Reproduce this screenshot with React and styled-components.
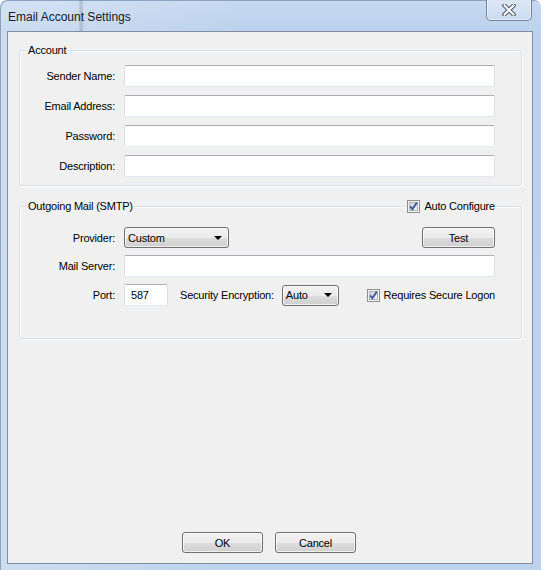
import React from 'react';
import styled, { createGlobalStyle } from 'styled-components';

const GlobalStyle = createGlobalStyle`
  html, body {
    margin: 0;
    padding: 0;
  }
  body {
    width: 541px;
    height: 570px;
    overflow: hidden;
    font-family: "Liberation Sans", Arial, sans-serif;
    font-size: 11px;
    letter-spacing: -0.2px;
    color: #000;
  }
`;

const Frame = styled.div`
  width: 541px;
  height: 570px;
  box-sizing: border-box;
  display: flex;
  flex-direction: column;
  padding: 0 8px 6px 7px;
  border-radius: 7px 7px 0 0;
  background:
    linear-gradient(to right, rgba(255, 255, 255, 0.25), rgba(255, 255, 255, 0) 45%),
    linear-gradient(to bottom, #c6d9f1 0, #bcd1ec 32px, #bdd2ed 100%);
  box-shadow: inset 1px 1px 0 #8ea3bf;
`;

const TitleBar = styled.div`
  height: 31px;
  flex: none;
  display: flex;
  justify-content: space-between;
  align-items: flex-start;
  background: linear-gradient(
    to right,
    transparent 71px,
    rgba(90, 100, 115, 0.18) 73px,
    rgba(90, 100, 115, 0.28) 74px,
    rgba(90, 100, 115, 0.18) 75px,
    transparent 77px
  );
`;

const Title = styled.span`
  font-size: 12px;
  line-height: 14px;
  letter-spacing: 0;
  margin: 10px 0 0 1px;
  color: #111a26;
`;

const CloseButton = styled.div`
  width: 46px;
  height: 21px;
  margin-right: 1px;
  box-sizing: border-box;
  border: 1px solid #72839b;
  border-top: none;
  border-radius: 0 0 5px 5px;
  background: linear-gradient(to bottom, rgba(255, 255, 255, 0.4), rgba(255, 255, 255, 0.15));
  box-shadow: inset 0 0 0 1px rgba(255, 255, 255, 0.5);
  display: flex;
  align-items: center;
  justify-content: center;
`;

const Client = styled.div`
  flex: 1;
  display: flex;
  flex-direction: column;
  background: #f0f0f0;
  border: 1px solid #7f8ea3;
  padding: 0 10px 10px 11px;
`;

const GroupBox = styled.div`
  position: relative;
  margin-top: ${({ $top }) => $top}px;
  padding: ${({ $padTop }) => $padTop}px 26px ${({ $padBottom }) => $padBottom}px 0;
  border: 1px solid #d5dfe5;
  border-radius: 3px;
  box-shadow: inset 1px 1px 0 #fff, 1px 1px 0 #fff;
`;

const Legend = styled.span`
  position: absolute;
  top: -7px;
  left: 6px;
  padding: 0 2px;
  line-height: 13px;
  background: #f0f0f0;
`;

const FormGrid = styled.div`
  display: grid;
  grid-template-columns: 95px 1fr;
  column-gap: 9px;
  row-gap: ${({ $gap }) => $gap}px;
  align-items: center;
`;

const Label = styled.label`
  text-align: right;
`;

const TextBox = styled.div`
  height: 22px;
  width: ${({ $width }) => ($width ? `${$width}px` : 'auto')};
  box-sizing: border-box;
  background: #fff;
  border: 1px solid #dbdfe6;
  border-top-color: #abadb3;
  border-bottom-color: #e3e9ef;
  border-radius: 2px;
  padding: 0 6px;
  display: flex;
  align-items: center;
`;

const Row = styled.div`
  display: flex;
  align-items: center;
`;

const Button = styled.button`
  width: ${({ $width }) => $width}px;
  height: 21px;
  margin-left: ${({ $left }) => ($left === 'auto' ? 'auto' : `${$left || 0}px`)};
  box-sizing: border-box;
  border: 1px solid #707070;
  border-radius: 3px;
  padding: 0;
  font-family: inherit;
  font-size: 11px;
  letter-spacing: -0.2px;
  color: #000;
  background: linear-gradient(to bottom, #f2f2f2 0%, #ebebeb 50%, #dddddd 51%, #cfcfcf 100%);
  box-shadow: inset 0 0 0 1px rgba(255, 255, 255, 0.7);
`;

const Select = styled.div`
  width: ${({ $width }) => $width}px;
  height: 21px;
  margin-left: ${({ $left }) => $left || 0}px;
  box-sizing: border-box;
  border: 1px solid #707070;
  border-radius: 3px;
  padding: 0 6px 0 3px;
  display: flex;
  align-items: center;
  justify-content: space-between;
  background: linear-gradient(to bottom, #f2f2f2 0%, #ebebeb 50%, #dddddd 51%, #cfcfcf 100%);
  box-shadow: inset 0 0 0 1px rgba(255, 255, 255, 0.7);
`;

const Arrow = styled.span`
  width: 0;
  height: 0;
  border-left: 4px solid transparent;
  border-right: 4px solid transparent;
  border-top: 4px solid #000;
`;

const Text = styled.span`
  margin-left: ${({ $left }) => $left || 0}px;
`;

const Check = styled.label`
  display: flex;
  align-items: center;
  gap: 4px;
  margin-left: ${({ $left }) => ($left === 'auto' ? 'auto' : `${$left || 0}px`)};
`;

const FloatingCheck = styled(Check)`
  position: absolute;
  top: -7px;
  right: 26px;
  line-height: 13px;
  padding-left: 1px;
  background: #f0f0f0;
`;

const Spacer = styled.div`
  flex: 1;
`;

const ButtonRow = styled.div`
  display: flex;
  justify-content: center;
  gap: 12px;
  padding-right: 3px;
`;

const CheckIcon = () => (
  <svg width="13" height="13" viewBox="0 0 13 13">
    <defs>
      <linearGradient id="cbg" x1="0" y1="0" x2="1" y2="1">
        <stop offset="0" stopColor="#cbcfd5" />
        <stop offset="1" stopColor="#f7f7f7" />
      </linearGradient>
    </defs>
    <rect x="0.5" y="0.5" width="12" height="12" fill="#f4f4f4" stroke="#8e8f8f" />
    <rect x="2.5" y="2.5" width="8" height="8" fill="url(#cbg)" stroke="#aeb3b9" />
    <path d="M3.2 6.4 L5.4 9.2 L9.8 2.6" fill="none" stroke="#3c5a9a" strokeWidth="1.9" />
  </svg>
);

const CloseGlyph = () => (
  <svg width="14" height="12" viewBox="0 0 14 12">
    <path
      d="M2.5 1.5 L11.5 10.5 M11.5 1.5 L2.5 10.5"
      stroke="#4b5363"
      strokeWidth="4.2"
      strokeLinecap="square"
    />
    <path
      d="M2.5 1.5 L11.5 10.5 M11.5 1.5 L2.5 10.5"
      stroke="#ffffff"
      strokeWidth="2.2"
      strokeLinecap="square"
    />
  </svg>
);

const accountFields = ['Sender Name:', 'Email Address:', 'Password:', 'Description:'];

export default function App() {
  return (
    <>
      <GlobalStyle />
      <Frame>
        <TitleBar>
          <Title>Email Account Settings</Title>
          <CloseButton>
            <CloseGlyph />
          </CloseButton>
        </TitleBar>
        <Client>
          <GroupBox $top={18} $padTop={14} $padBottom={8}>
            <Legend>Account</Legend>
            <FormGrid $gap={8}>
              {accountFields.map((label) => (
                <React.Fragment key={label}>
                  <Label>{label}</Label>
                  <TextBox />
                </React.Fragment>
              ))}
            </FormGrid>
          </GroupBox>

          <GroupBox $top={20} $padTop={20} $padBottom={32}>
            <Legend>Outgoing Mail (SMTP)</Legend>
            <FloatingCheck>
              <CheckIcon />
              Auto Configure
            </FloatingCheck>
            <FormGrid $gap={7}>
              <Label>Provider:</Label>
              <Row>
                <Select $width={105}>
                  <span>Custom</span>
                  <Arrow />
                </Select>
                <Button $width={73} $left="auto">Test</Button>
              </Row>

              <Label>Mail Server:</Label>
              <TextBox />

              <Label>Port:</Label>
              <Row>
                <TextBox $width={44}>587</TextBox>
                <Text $left={12}>Security Encryption:</Text>
                <Select $width={57} $left={8}>
                  <span>Auto</span>
                  <Arrow />
                </Select>
                <Check $left="auto">
                  <CheckIcon />
                  Requires Secure Logon
                </Check>
              </Row>
            </FormGrid>
          </GroupBox>

          <Spacer />

          <ButtonRow>
            <Button $width={81}>OK</Button>
            <Button $width={81}>Cancel</Button>
          </ButtonRow>
        </Client>
      </Frame>
    </>
  );
}
